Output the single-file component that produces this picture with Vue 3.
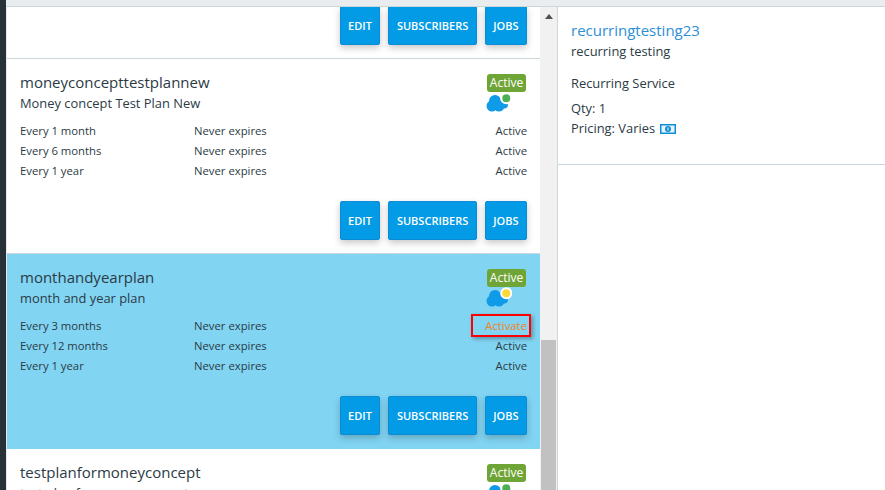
<script setup>
const plans = [
  {
    name: 'moneyconcepttestplannew', desc: 'Money concept Test Plan New', dot: '#4caf50', selected: false,
    rows: [['Every 1 month', 'Never expires', 'Active'], ['Every 6 months', 'Never expires', 'Active'], ['Every 1 year', 'Never expires', 'Active']],
  },
  {
    name: 'monthandyearplan', desc: 'month and year plan', dot: '#fdd835', selected: true,
    rows: [['Every 3 months', 'Never expires', 'Activate'], ['Every 12 months', 'Never expires', 'Active'], ['Every 1 year', 'Never expires', 'Active']],
  },
]
const buttons = ['EDIT', 'SUBSCRIBERS', 'JOBS']
</script>

<template>
  <div class="page">
    <div class="rail"></div>
    <div class="main">
      <div class="topbar"></div>
      <div class="panes">
        <div class="list">
          <div class="plan-list">
            <div class="actions first">
              <button v-for="b in buttons" :key="b" class="btn">{{ b }}</button>
            </div>
            <div v-for="p in plans" :key="p.name" class="plan" :class="{ selected: p.selected }">
              <div class="head">
                <div>
                  <div class="name">{{ p.name }}</div>
                  <div class="desc">{{ p.desc }}</div>
                </div>
                <div class="status">
                  <span class="badge">Active</span>
                  <svg class="cloud" width="26" height="21" viewBox="0 0 26 21">
                    <g fill="#0f9be8">
                      <circle cx="9" cy="9" r="6" />
                      <circle cx="6" cy="14" r="5.500" />
                      <circle cx="13" cy="14" r="5.500" />
                      <circle cx="18" cy="12.500" r="4" />
                    </g>
                    <circle :fill="p.dot" stroke="#fff" stroke-width="2" cx="20.300" cy="6.300" r="5" />
                  </svg>
                </div>
              </div>
              <div class="rows">
                <div v-for="r in p.rows" :key="r[0]" class="row">
                  <span class="period">{{ r[0] }}</span>
                  <span class="expiry">{{ r[1] }}</span>
                  <span class="state" :class="{ activate: r[2] === 'Activate' }">{{ r[2] }}</span>
                </div>
              </div>
              <div class="actions">
                <button v-for="b in buttons" :key="b" class="btn">{{ b }}</button>
              </div>
            </div>
            <div class="plan">
              <div class="head">
                <div>
                  <div class="name">testplanformoneyconcept</div>
                  <div class="desc">test plan for money concept</div>
                </div>
                <div class="status">
                  <span class="badge">Active</span>
                  <svg class="cloud" width="26" height="21" viewBox="0 0 26 21">
                    <g fill="#0f9be8">
                      <circle cx="9" cy="9" r="6" />
                      <circle cx="6" cy="14" r="5.500" />
                      <circle cx="13" cy="14" r="5.500" />
                      <circle cx="18" cy="12.500" r="4" />
                    </g>
                    <circle fill="#4caf50" stroke="#fff" stroke-width="2" cx="20.300" cy="6.300" r="5" />
                  </svg>
                </div>
              </div>
            </div>
          </div>
          <div class="scrollbar">
            <div class="arrow"></div>
            <div class="thumb"></div>
          </div>
        </div>
        <div class="detail">
          <div class="summary">
            <div class="service-link">recurringtesting23</div>
            <div class="service-desc">recurring testing</div>
            <div class="service-type">Recurring Service</div>
            <div class="line">Qty: 1</div>
            <div class="line">Pricing: Varies
              <svg class="money" width="16" height="10" viewBox="0 0 16 10">
                <rect width="16" height="10" fill="#0f8fd8" />
                <rect x="1.500" y="1.500" width="13" height="7" fill="#e8f4fc" />
                <circle cx="8" cy="5" r="3" fill="#0f8fd8" />
                <rect x="7.500" y="3.500" width="1" height="3" fill="#fff" />
              </svg>
            </div>
          </div>
        </div>
      </div>
    </div>
  </div>
</template>

<style>
html, body { margin: 0; overflow: hidden; }
</style>

<style scoped>
.page {
  display: flex;
  width: 885px;
  height: 490px;
  overflow: hidden;
  font-family: "Open Sans", "Noto Sans", sans-serif;
  color: #2b3a45;
  background: #fff;
}
.rail { width: 6px; flex: none; background: #263238; }
.main { flex: 1; display: flex; flex-direction: column; min-width: 0; }
.topbar { height: 6px; flex: none; background: #e9edf0; border-bottom: 1px solid #ccd6dd; }
.panes { flex: 1; display: flex; min-height: 0; }
.list {
  width: 552px;
  flex: none;
  display: flex;
  border-left: 1px solid #e4e9ec;
  border-right: 1px solid #ccd6dd;
  box-sizing: border-box;
}
.plan-list { flex: 1; min-width: 0; overflow: hidden; }
.actions { display: flex; justify-content: flex-end; gap: 8px; padding-right: 13px; }
.actions.first { height: 51px; align-items: flex-start; border-bottom: 1px solid #ccd6dd; }
.first .btn { margin-top: -1px; }
.btn {
  height: 39px;
  padding: 0 7.500px;
  border: 1px solid #0b8bd6;
  border-radius: 2px;
  background: #039be5;
  color: #fff;
  font: 600 11px "Open Sans", sans-serif;
  box-shadow: 0 3px 7px rgba(0, 0, 0, .22);
}
.plan { height: 195px; box-sizing: border-box; padding: 12px 0 0 13px; border-bottom: 1px solid #ccd6dd; }
.plan.selected { background: #81d4f2; border-bottom-color: #81d4f2; }
.head { display: flex; justify-content: space-between; padding-right: 14px; height: 49px; }
.name { font-size: 15px; line-height: 22px; }
.desc { font-size: 12.900px; line-height: 20px; }
.status { display: flex; flex-direction: column; align-items: flex-end; padding-top: 3px; }
.badge {
  width: 39px;
  height: 18px;
  border-radius: 3px;
  background: #6fa536;
  color: #fff;
  font-size: 12px;
  line-height: 18px;
  text-align: center;
}
.cloud { margin-right: 14px; flex: none; }
.rows { height: 81px; }
.row { display: flex; height: 20px; align-items: center; font-size: 11.300px; padding-right: 13px; }
.period { width: 174px; }
.expiry { flex: 1; }
.state { position: relative; }
.activate { color: #f58220; }
.activate::after {
  content: "";
  position: absolute;
  inset: -4px -4px -4px -14px;
  border: 2px solid #f00;
  box-shadow: 2px 2px 4px rgba(0, 0, 0, .3);
}
.scrollbar { width: 17px; flex: none; background: #f1f1f1; display: flex; flex-direction: column; justify-content: space-between; align-items: center; }
.arrow { width: 0; height: 0; margin-top: 7px; border-left: 4px solid transparent; border-right: 4px solid transparent; border-bottom: 5px solid #505050; }
.thumb { width: 15px; height: 150px; background: #c1c1c1; }
.detail { flex: 1; }
.summary { height: 158px; box-sizing: border-box; padding: 13px 13px 0; border-bottom: 1px solid #ccd6dd; }
.service-link { color: #2d8fd5; font-size: 15px; line-height: 21px; }
.service-desc { font-size: 12.900px; line-height: 20px; }
.service-type { font-size: 12.900px; line-height: 20px; margin-top: 12px; }
.line { font-size: 12.900px; line-height: 20px; }
.service-type + .line { margin-top: 5px; }
.money { vertical-align: -1px; margin-left: 2px; }
</style>
